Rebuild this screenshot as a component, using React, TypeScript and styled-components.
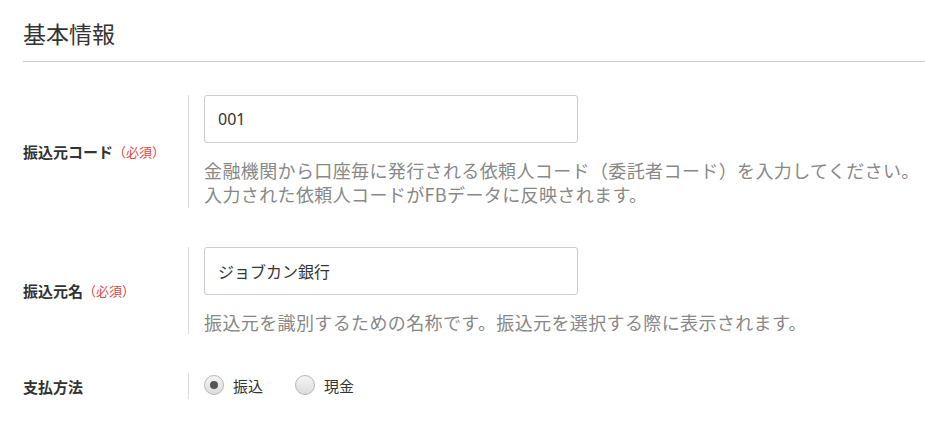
import React from "react";
import styled, { createGlobalStyle } from "styled-components";

const Global = createGlobalStyle`
  html, body { margin: 0; padding: 0; background: #fff; }
  body { font-family: "Noto Sans CJK JP", "Noto Sans", sans-serif; color: #333; }
`;

const Page = styled.div`
  padding: 0 0 0 23px;
  width: 902px;
`;

const Header = styled.h2`
  margin: 0;
  padding: 16px 0 11px;
  font-size: 23px;
  line-height: 34px;
  font-weight: 400;
  color: #333;
  border-bottom: 1px solid #ccc;
`;

const Form = styled.div`
  display: flex;
  flex-direction: column;
  gap: 39px;
  padding-top: 33px;
`;

const Row = styled.div`
  display: grid;
  grid-template-columns: 165px 1fr;
  align-items: stretch;
`;

const Label = styled.div`
  display: flex;
  align-items: center;
  font-size: 15px;
  font-weight: 700;
  color: #333;
  white-space: nowrap;
`;

const Required = styled.span`
  font-size: 13px;
  font-weight: 400;
  color: #e0464a;
`;

const Field = styled.div<{ $pb?: number }>`
  border-left: 1px solid #ddd;
  padding: 0 0 ${(p) => p.$pb ?? 0}px 15px;
  display: flex;
  flex-direction: column;
`;

const Input = styled.input`
  box-sizing: border-box;
  width: 374px;
  height: 48px;
  border: 1px solid #ccc;
  border-radius: 3px;
  padding: 0 13px;
  font-family: "Noto Sans", "Noto Sans CJK JP", sans-serif;
  font-size: 16px;
  color: #333;
  background: #fff;
  outline: none;
`;

const Help = styled.p`
  margin: 15px 0 0;
  font-size: 18px;
  line-height: 24px;
  letter-spacing: 0.38px;
  color: #888;
  white-space: nowrap;
`;

const RadioGroup = styled.div`
  display: flex;
  align-items: center;
  height: 28px;
  margin-top: -2px;
`;

const RadioItem = styled.label`
  display: flex;
  align-items: center;
  gap: 9px;
  margin-right: 32px;
  font-size: 15px;
  color: #333;
  cursor: pointer;
`;

const Circle = styled.span<{ $checked?: boolean }>`
  box-sizing: border-box;
  width: 20px;
  height: 20px;
  border-radius: 50%;
  border: 1px solid #b8b8b8;
  background: linear-gradient(#f4f4f4, #dcdcdc);
  display: flex;
  align-items: center;
  justify-content: center;
  &::after {
    content: "";
    width: 8px;
    height: 8px;
    border-radius: 50%;
    background: ${(p) => (p.$checked ? "#555" : "transparent")};
  }
`;

export default function App() {
  return (
    <>
      <Global />
      <Page>
        <Header>基本情報</Header>
        <Form>
          <Row>
            <Label>
              振込元コード<Required>（必須）</Required>
            </Label>
            <Field $pb={2}>
              <Input defaultValue="001" />
              <Help>
                金融機関から口座毎に発行される依頼人コード（委託者コード）を入力してください。
                <br />
                入力された依頼人コードがFBデータに反映されます。
              </Help>
            </Field>
          </Row>
          <Row>
            <Label>
              振込元名<Required>（必須）</Required>
            </Label>
            <Field>
              <Input defaultValue="ジョブカン銀行" />
              <Help>振込元を識別するための名称です。振込元を選択する際に表示されます。</Help>
            </Field>
          </Row>
          <Row>
            <Label>支払方法</Label>
            <Field>
              <RadioGroup>
                <RadioItem>
                  <Circle $checked />
                  振込
                </RadioItem>
                <RadioItem>
                  <Circle />
                  現金
                </RadioItem>
              </RadioGroup>
            </Field>
          </Row>
        </Form>
      </Page>
    </>
  );
}
